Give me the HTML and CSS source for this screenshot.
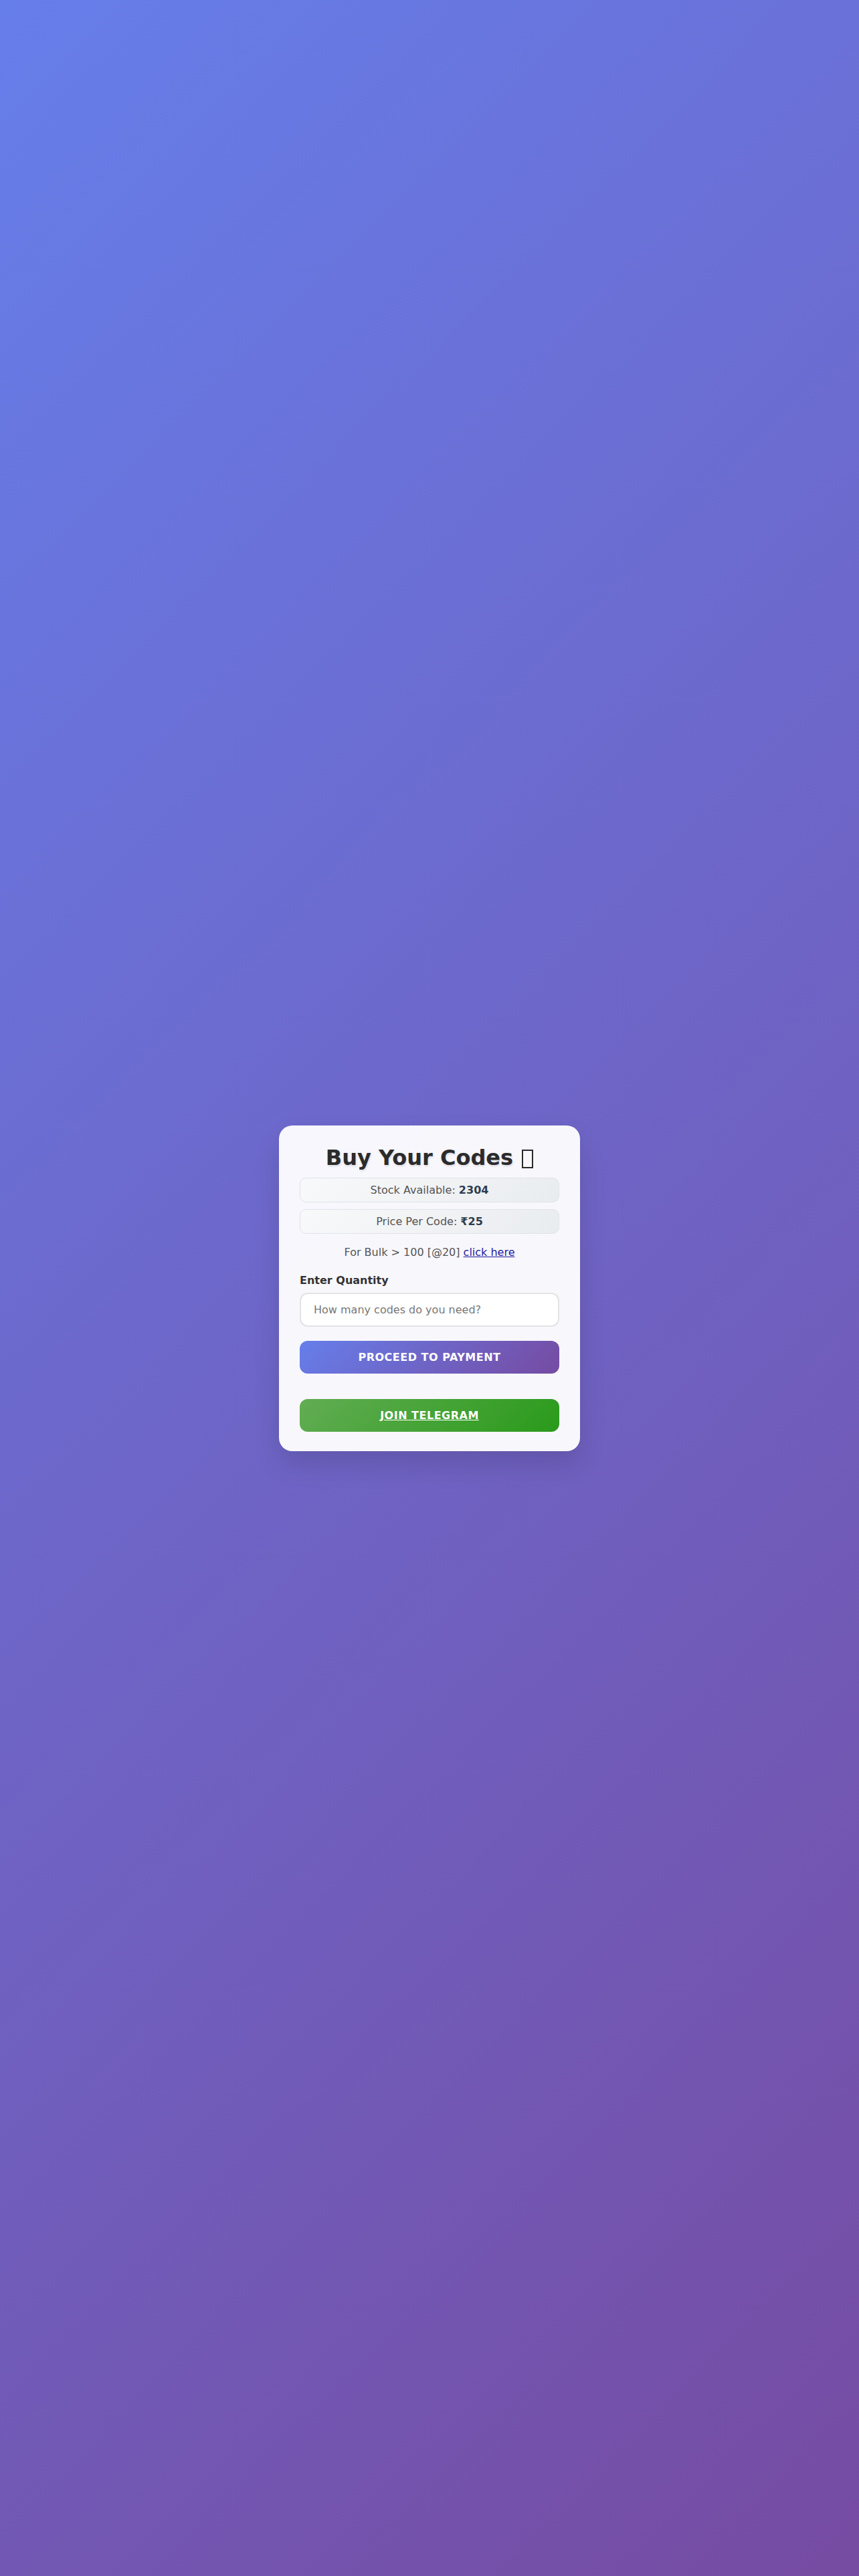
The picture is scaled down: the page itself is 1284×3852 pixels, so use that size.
FILE: index.html
```html
<!DOCTYPE html>
<html lang="en">
<head>
<meta charset="utf-8">
<title>Buy Your Codes</title>
<link rel="stylesheet" href="styles.css">
</head>
<body>
<main class="card">
  <h1 class="title">Buy Your Codes <span class="tofu"></span></h1>
  <div class="info">Stock Available: <strong>2304</strong></div>
  <div class="info">Price Per Code: <strong>₹25</strong></div>
  <p class="bulk">For Bulk &gt; 100 [@20] <a href="#" class="bulk-link">click here</a></p>
  <label class="label" for="qty">Enter Quantity</label>
  <input class="input" id="qty" type="number" placeholder="How many codes do you need?">
  <button class="btn btn-pay" type="button">Proceed to Payment</button>
  <a href="#" class="btn btn-tg">Join Telegram</a>
</main>
</body>
</html>
```

FILE: styles.css
```css
* { box-sizing: border-box; }
html, body { margin: 0; padding: 0; }
body {
  min-height: 3852px;
  display: flex;
  align-items: center;
  justify-content: center;
  background: linear-gradient(135deg, #667eea 0%, #764ba2 100%);
  font-family: "DejaVu Sans", Verdana, sans-serif;
  font-size: 16px;
  color: #333;
}
.card {
  width: 450px;
  padding: 30px 31px 29px;
  background: rgba(255, 255, 255, 0.95);
  border-radius: 20px;
  box-shadow: 0 20px 40px rgba(0, 0, 0, 0.12);
  display: flex;
  flex-direction: column;
}
.title {
  margin: 0 0 11px;
  font-size: 32px;
  font-weight: bold;
  text-align: center;
  color: #2b2b2b;
  line-height: 37px;
  text-shadow: 1px 2px 3px rgba(0, 0, 0, 0.12);
}
.tofu {
  display: inline-block;
  width: 17px;
  height: 28px;
  border: 2px solid #2b2b2b;
  vertical-align: -5px;
  margin-left: 2px;
}
.info {
  background: linear-gradient(135deg, #f8f9fa, #e9ecef);
  border: 1px solid #e0e3e8;
  border-radius: 10px;
  padding: 8px 10px;
  text-align: center;
  color: #555;
  line-height: 19px;
  margin-bottom: 10px;
}
.info strong { color: #2c3e50; }
.bulk {
  margin: 8px 0 23px;
  text-align: center;
  color: #555;
  line-height: 19px;
}
.bulk-link {
  color: #1f1ba3;
  text-decoration: underline;
}
.label {
  font-weight: bold;
  color: #333;
  line-height: 19px;
  margin-bottom: 9px;
}
.input {
  height: 51px;
  border: 2px solid #e3e3e6;
  border-radius: 12px;
  background: #fff;
  padding: 0 19px;
  font-family: "DejaVu Sans", Verdana, sans-serif;
  font-size: 16px;
  color: #333;
  margin-bottom: 21px;
}
.input::placeholder { color: #777; }
.btn {
  display: flex;
  align-items: center;
  justify-content: center;
  height: 49px;
  border: none;
  border-radius: 12px;
  color: #fff;
  font-family: "DejaVu Sans", Verdana, sans-serif;
  font-size: 16px;
  font-weight: bold;
  text-transform: uppercase;
  letter-spacing: 0.5px;
}
.btn-pay {
  background: linear-gradient(135deg, #667eea 0%, #764ba2 100%);
  margin-bottom: 38px;
}
.btn-tg {
  background: linear-gradient(135deg, #62ad53 0%, #2a9a1b 100%);
  text-decoration: underline;
}
```
